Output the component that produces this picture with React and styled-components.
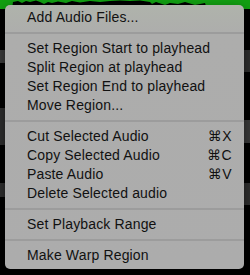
import React from "react";
import styled, { createGlobalStyle } from "styled-components";

const Global = createGlobalStyle`
  html, body { margin: 0; padding: 0; background: #000; }
  body { width: 250px; height: 275px; overflow: hidden; }
`;

const Stage = styled.div`
  position: relative;
  width: 250px;
  height: 275px;
  background: #000;
  overflow: hidden;
`;

const Backdrop = styled.div`
  display: flex;
  flex-direction: column;
  width: 250px;
  height: 275px;
`;

const Wave = styled.svg`
  display: block;
  flex: none;
`;

const Lanes = styled.div`
  flex: 1;
  display: flex;
  justify-content: space-between;
`;

const Strip = styled.div`
  width: 6px;
  display: flex;
  flex-direction: column;
`;

const Band = styled.div`
  flex: none;
  margin-top: ${(p) => p.$gap}px;
  height: ${(p) => p.$h}px;
  background: ${(p) => p.$c || "#2f2f2f"};
`;

const Menu = styled.div`
  position: absolute;
  left: 5px;
  top: 5px;
  width: 239px;
  box-sizing: border-box;
  padding: 3px 0 4px;
  border-radius: 5px;
  background: linear-gradient(#afb3ab 0px, #adadac 30px, #acacac 100%);
  box-shadow: 0 4px 12px rgba(0, 0, 0, 0.5);
  font-family: "Liberation Sans", Arial, sans-serif;
`;

const Item = styled.div`
  display: flex;
  justify-content: space-between;
  align-items: center;
  height: 19px;
  line-height: 19px;
  padding: 0 12px 0 22px;
  font-size: 14px;
  letter-spacing: 0.15px;
  color: #111;
  white-space: nowrap;
`;

const Shortcut = styled.span`
  font-family: "Liberation Sans", "DejaVu Sans", sans-serif;
  font-size: 14px;
  letter-spacing: 0.5px;
`;

const Separator = styled.div`
  height: 2px;
  margin: 5px 0;
  background: #9c9c9c;
`;

const sections = [
  [{ label: "Add Audio Files..." }],
  [
    { label: "Set Region Start to playhead" },
    { label: "Split Region at playhead" },
    { label: "Set Region End to playhead" },
    { label: "Move Region..." },
  ],
  [
    { label: "Cut Selected Audio", key: "⌘X" },
    { label: "Copy Selected Audio", key: "⌘C" },
    { label: "Paste Audio", key: "⌘V" },
    { label: "Delete Selected audio" },
  ],
  [{ label: "Set Playback Range" }],
  [{ label: "Make Warp Region" }],
];

const wavePts =
  "0,9 12,9 13,2 18,1 22,3 26,1 30,2 36,0.5 40,2 44,4 48,2 52,3 58,1.5 66,3 72,1 80,2.5 90,1 100,2 110,1 120,0.5 130,1 140,0.5 150,2 152,4 156,2 165,5 170,3 178,4 185,2 195,5 205,3 207,9 250,9 250,0 0,0";

export default function App() {
  return (
    <>
      <Global />
      <Stage>
        <Backdrop>
          <Wave width="250" height="9" viewBox="0 0 250 9">
            <polygon points={wavePts} fill="#12a012" />
          </Wave>
          <Lanes>
            <Strip>
              <Band $gap={41} $h={13} $c="#3c3c3c" />
              <Band $gap={45} $h={37} />
              <Band $gap={38} $h={14} />
            </Strip>
            <Strip>
              <Band $gap={41} $h={22} />
              <Band $gap={48} $h={23} $c="#3a3a3a" />
              <Band $gap={40} $h={22} />
            </Strip>
          </Lanes>
        </Backdrop>
        <Menu>
          {sections.map((sec, i) => (
            <React.Fragment key={i}>
              {i > 0 && <Separator />}
              {sec.map((it) => (
                <Item key={it.label}>
                  <span>{it.label}</span>
                  {it.key && <Shortcut>{it.key}</Shortcut>}
                </Item>
              ))}
            </React.Fragment>
          ))}
        </Menu>
      </Stage>
    </>
  );
}
